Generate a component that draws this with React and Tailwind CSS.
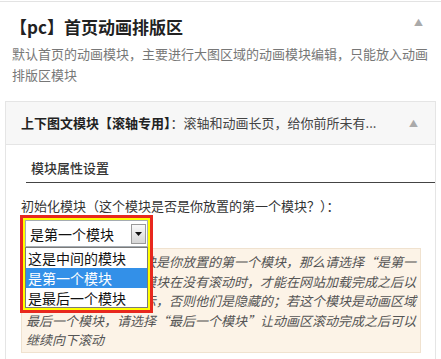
export default function App() {
  const font = {
    fontFamily: '"Noto Sans CJK SC", "Noto Sans", "Liberation Sans", sans-serif',
  };

  const noteLines = [
    "提示：如果该动画模块是你放置的第一个模块，那么请选择“是第一",
    "个模块”，只有这个模块在没有滚动时，才能在网站加载完成之后以",
    "最快的速度完整地显示，否则他们是隐藏的；若这个模块是动画区域",
    "最后一个模块，请选择“最后一个模块”让动画区滚动完成之后可以",
    "继续向下滚动",
  ];

  return (
    <div
      className="w-[441px] h-[359px] overflow-hidden bg-white text-[#333]"
      style={font}
    >
      <div className="mt-[1px] border-t border-[#e3e3e3]">
        {/* panel title */}
        <div className="flex items-start justify-between pl-[10px] pr-[18px] pt-[13px]">
          <h2 className="text-[17px] font-bold leading-[24px] text-[#222]">
            【pc】首页动画排版区
          </h2>
          <span className="mt-[3px] text-[9px] leading-none text-[#aaa]">▲</span>
        </div>
        <p className="mt-[4px] px-[12px] text-[13px] leading-[21px] text-[#777]">
          默认首页的动画模块，主要进行大图区域的动画模块编辑，只能放入动画排版区模块
        </p>

        {/* inner module panel */}
        <div className="mt-[16px] mx-[5px] border border-[#e5e5e5]">
          <div className="flex h-[43px] items-center justify-between border-b border-[#e5e5e5] bg-[#f7f7f7] pl-[15px] pr-[17px]">
            <div className="truncate text-[13px] leading-[20px]">
              <span className="font-bold text-[#222]">上下图文模块【滚轴专用】</span>
              <span className="text-[#444]">：滚轴和动画长页，给你前所未有...</span>
            </div>
            <span className="text-[9px] leading-none text-[#aaa]">▲</span>
          </div>

          <div className="pl-[15px] pr-[14px] pb-[20px]">
            <div className="ml-[5px] -mr-[14px] border-b border-[#444] pt-[9px] pb-[4px] pl-[5px]">
              <span className="text-[13px] font-medium leading-[20px] text-[#333]">
                模块属性设置
              </span>
            </div>

            <p className="mt-[14px] text-[13px] leading-[18px] text-[#333]">
              初始化模块（这个模块是否是你放置的第一个模块？）：
            </p>

            <div className="relative h-[32px]">
              {/* open select, highlighted */}
              <div className="absolute left-[-1px] top-[0px] z-10 w-[133px] border-[3px] border-[#e8281e] bg-white">
                <div className="border-2 border-[#ffff00]">
                  <div className="flex h-[27px] items-center justify-between border border-[#a5acb2] pl-[4px] pr-[1px]">
                    <span className="text-[14px] leading-[20px] text-[#111]">是第一个模块</span>
                    <span className="flex h-[20px] w-[15px] items-center justify-center border border-[#9a9a9a] bg-gradient-to-b from-[#fafafa] to-[#d6d6d6]">
                      <svg width="7" height="4" viewBox="0 0 7 4">
                        <path d="M0 0h7L3.5 4z" fill="#111" />
                      </svg>
                    </span>
                  </div>
                  <div className="border border-[#7a7a7a] bg-white">
                    <div className="h-[20px] pl-[2px] text-[14px] leading-[20px] text-[#111]">
                      这是中间的模块
                    </div>
                    <div className="h-[20px] bg-[#3390e8] pl-[2px] text-[14px] leading-[20px] text-white">
                      是第一个模块
                    </div>
                    <div className="h-[19px] pl-[2px] text-[14px] leading-[20px] text-[#111]">
                      是最后一个模块
                    </div>
                  </div>
                </div>
              </div>
            </div>

            {/* notice */}
            <div className="mt-[1px] border border-[#f0e2cf] bg-[#fcf3e7] px-[4px] pt-[3px] pb-[2px]">
              {noteLines.map((line, i) => (
                <div
                  key={i}
                  className="whitespace-nowrap text-[13px] italic leading-[19.5px] text-[#555]"
                >
                  {line}
                </div>
              ))}
            </div>
          </div>
        </div>
      </div>
    </div>
  );
}
